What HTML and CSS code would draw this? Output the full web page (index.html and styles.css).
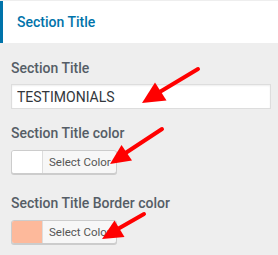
FILE: index.html
```html
<html>
  <head>
    <link rel="stylesheet" href="styles.css">
  </head>
  <body>
    <div class="panel">
      <h3 class="section-head">Section Title</h3>
      <div class="controls">
        <div class="control">
          <label class="control-label">Section Title</label>
          <input class="text-input" type="text" value="TESTIMONIALS">
        </div>
        <div class="control">
          <label class="control-label">Section Title color</label>
          <button class="color-btn"><span class="swatch"></span><span class="btn-text">Select Color</span></button>
        </div>
        <div class="control">
          <label class="control-label">Section Title Border color</label>
          <button class="color-btn"><span class="swatch swatch-peach"></span><span class="btn-text">Select Color</span></button>
        </div>
      </div>
      <svg class="arrows" width="278" height="255" viewBox="0 0 278 255">
        <g stroke="#f00" stroke-width="4" stroke-linecap="round">
          <line x1="198" y1="68" x2="158" y2="92"/>
          <line x1="162" y1="128" x2="124" y2="153"/>
          <line x1="144" y1="213" x2="116" y2="229"/>
        </g>
        <g fill="#f00">
          <polygon points="142,102 166.5,99.5 155,81.5"/>
          <polygon points="110,163 132,159.5 121.5,144"/>
          <polygon points="102,238 124.5,236 114.5,219.5"/>
        </g>
      </svg>
    </div>
  </body>
</html>
```

FILE: styles.css
```css
body {
  margin: 0;
  background: #eee;
  font-family: Roboto, "Liberation Sans", sans-serif;
}
.panel {
  position: relative;
  width: 278px;
  height: 255px;
}
.section-head {
  margin: 0;
  margin-top: 1px;
  height: 42px;
  line-height: 42px;
  padding-left: 14px;
  background: #fff;
  border-left: 3px solid #0073aa;
  color: #0073aa;
  font-size: 14px;
  font-weight: 500;
}
.controls {
  padding: 15px 8px 0 11px;
}
.control {
  display: flex;
  flex-direction: column;
  align-items: flex-start;
  margin-bottom: 14px;
}
.control-label {
  display: block;
  font-size: 14px;
  line-height: 20px;
  font-weight: 500;
  color: #555d66;
  margin-bottom: 6px;
}
.text-input {
  box-sizing: border-box;
  width: 260px;
  height: 25px;
  margin: 0;
  padding: 0 5px;
  border: 1px solid #ddd;
  box-shadow: inset 0 1px 2px rgba(0,0,0,.07);
  background: #fff;
  font-family: Roboto, "Liberation Sans", sans-serif;
  font-size: 14px;
  color: #32373c;
  outline: none;
}
.color-btn {
  display: flex;
  margin: 1px 0 5px 0;
  padding: 0;
  height: 24px;
  border: 1px solid #ccc;
  border-radius: 3px;
  box-shadow: 0 1px 0 #ccc;
  background: #f7f7f7;
  overflow: hidden;
  cursor: pointer;
}
.swatch {
  width: 30px;
  height: 100%;
  background: #fff;
}
.swatch-peach {
  background: #fdb99b;
}
.btn-text {
  display: flex;
  align-items: center;
  height: 100%;
  padding: 0 5px 0 6px;
  border-left: 1px solid #ddd;
  font-family: Roboto, "Liberation Sans", sans-serif;
  font-size: 11.5px;
  color: #555;
}
.arrows {
  position: absolute;
  top: 0;
  left: 0;
}
```
